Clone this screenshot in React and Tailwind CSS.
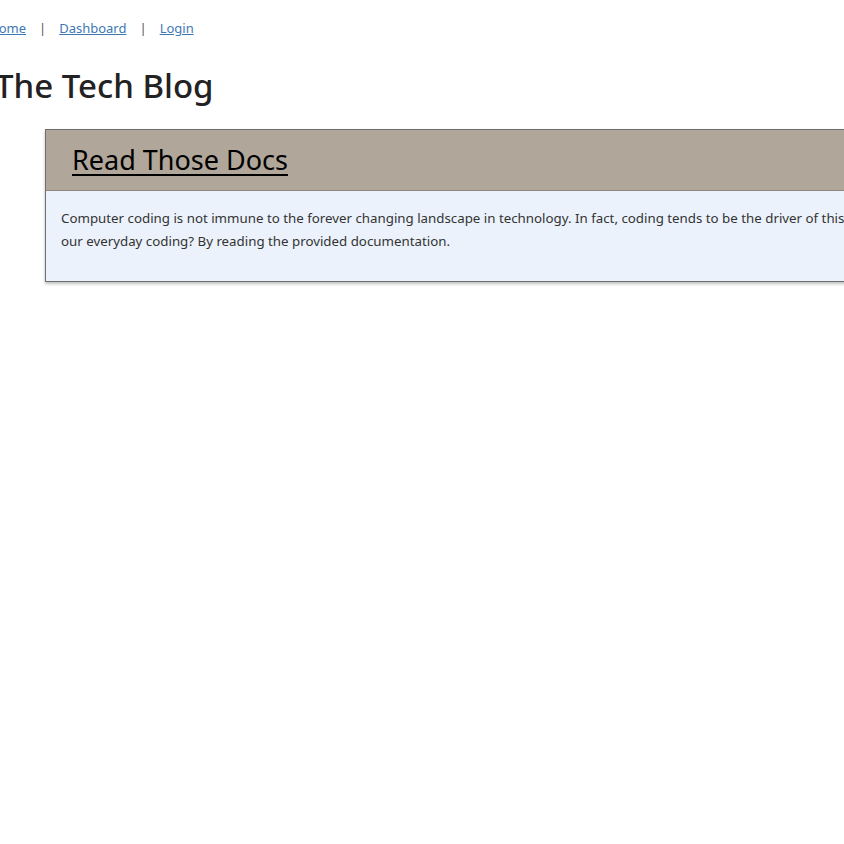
export default function App() {
  return (
    <div className="w-[844px] h-[844px] overflow-hidden bg-white" style={{ fontFamily: '"Noto Sans", "Open Sans", sans-serif' }}>
      <nav className="ml-[-11px] pt-[18px] flex items-center text-[13px] leading-[20px] text-[#3d78b3] whitespace-nowrap">
        <a href="#" className="underline">Home</a>
        <span className="mx-[13px] text-[#555]">|</span>
        <a href="#" className="underline">Dashboard</a>
        <span className="mx-[13px] text-[#555]">|</span>
        <a href="#" className="underline">Login</a>
      </nav>
      <h1 className="ml-[-5px] mt-[27px] text-[33px] leading-[42px] font-medium text-[#222] whitespace-nowrap">The Tech Blog</h1>
      <div className="ml-[45px] mt-[22px] w-[900px] border border-[#6e6e6e] shadow-[0_2px_3px_rgba(0,0,0,0.25)]">
        <div className="h-[61px] bg-[#b0a69a] border-b border-[#8f877d] pl-[26px] flex items-center">
          <a href="#" className="text-[27px] leading-[34px] text-black underline decoration-[2px] underline-offset-[4px] whitespace-nowrap">Read Those Docs</a>
        </div>
        <div className="bg-[#ebf2fb] pl-[15px] pt-[16px] pb-[28px] text-[13.3px] leading-[23px] text-[#333]">
          <p className="whitespace-nowrap">
            Computer coding is not immune to the forever changing landscape in technology. In fact, coding tends to be the driver of this change. How do we keep up with
            <br />
            our everyday coding? By reading the provided documentation.
          </p>
        </div>
      </div>
    </div>
  );
}
